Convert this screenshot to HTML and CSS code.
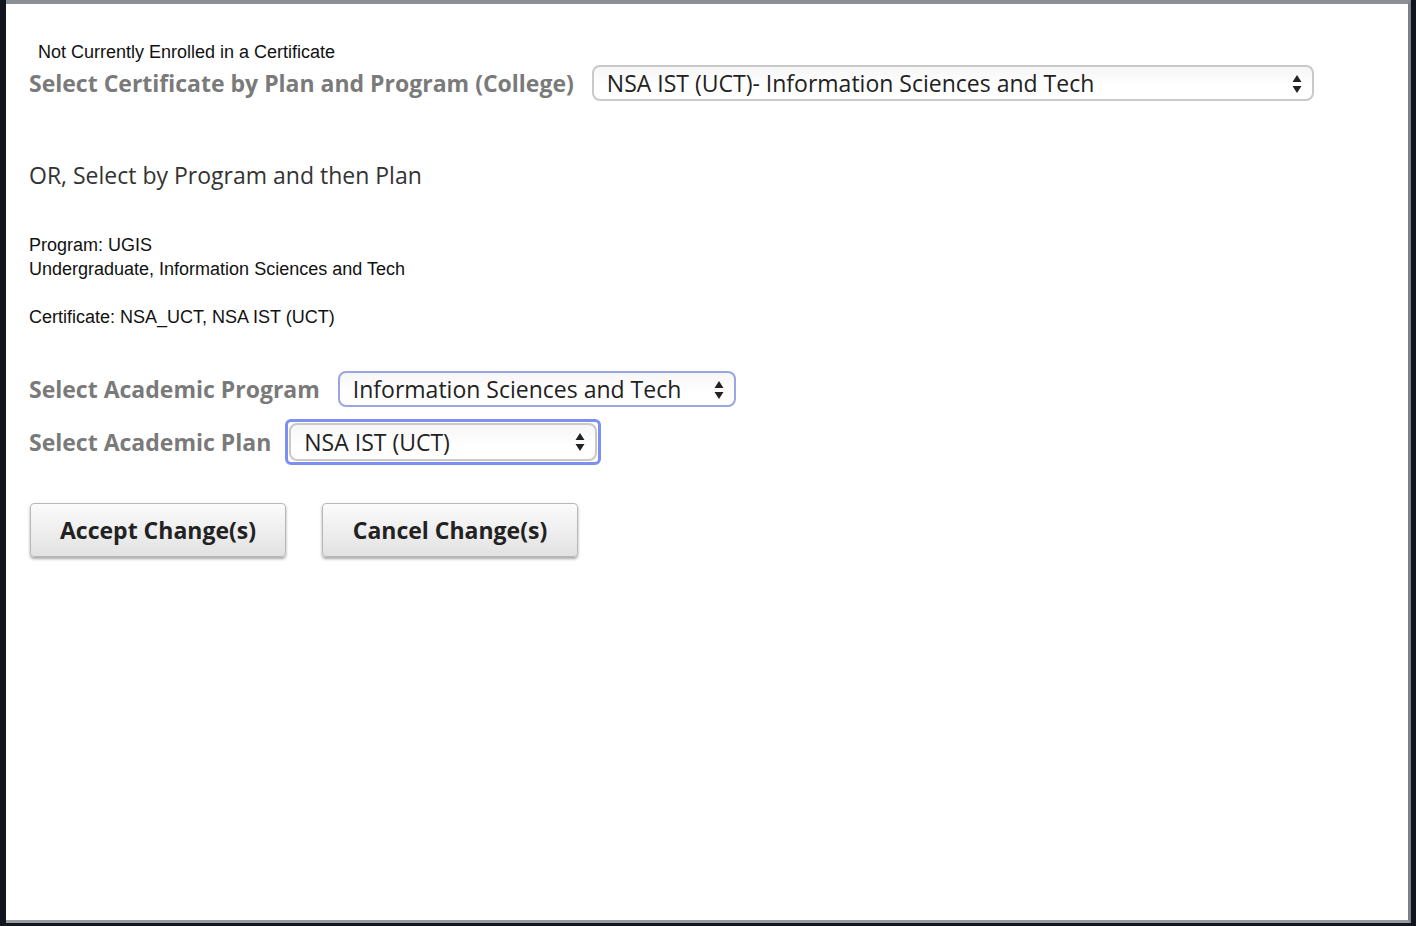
FILE: index.html
```html
<!DOCTYPE html>
<html>
<head>
<meta charset="utf-8">
<link rel="stylesheet" href="styles.css">
</head>
<body>
<div class="panel">
  <div class="status">Not Currently Enrolled in a Certificate</div>
  <div class="row row-cert">
    <label class="lbl">Select Certificate by Plan and Program (College)</label>
    <div class="sel sel-cert">
      <span class="sel-text">NSA IST (UCT)- Information Sciences and Tech</span>
      <svg class="arrows" width="10" height="22" viewBox="0 0 10 22"><path d="M5 2 L9.5 9 L0.5 9 Z M0.5 13 L9.5 13 L5 20 Z" fill="#222"/></svg>
    </div>
  </div>
  <div class="or">OR, Select by Program and then Plan</div>
  <div class="info">
    <div>Program: UGIS</div>
    <div>Undergraduate, Information Sciences and Tech</div>
  </div>
  <div class="info cert">Certificate: NSA_UCT, NSA IST (UCT)</div>
  <div class="row row-prog">
    <label class="lbl">Select Academic Program</label>
    <div class="sel sel-prog">
      <span class="sel-text">Information Sciences and Tech</span>
      <svg class="arrows" width="10" height="22" viewBox="0 0 10 22"><path d="M5 2 L9.5 9 L0.5 9 Z M0.5 13 L9.5 13 L5 20 Z" fill="#222"/></svg>
    </div>
  </div>
  <div class="row row-plan">
    <label class="lbl">Select Academic Plan</label>
    <div class="focus">
      <div class="sel sel-plan">
        <span class="sel-text">NSA IST (UCT)</span>
        <svg class="arrows" width="10" height="22" viewBox="0 0 10 22"><path d="M5 2 L9.5 9 L0.5 9 Z M0.5 13 L9.5 13 L5 20 Z" fill="#222"/></svg>
      </div>
    </div>
  </div>
  <div class="buttons">
    <button class="btn">Accept Change(s)</button>
    <button class="btn">Cancel Change(s)</button>
  </div>
</div>
</body>
</html>
```

FILE: styles.css
```css
html, body {
  margin: 0;
  padding: 0;
  background: #11161e;
  height: 926px;
  overflow: hidden;
}
.panel {
  box-sizing: border-box;
  margin-left: 6px;
  width: 1405px;
  height: 923px;
  background: #ffffff;
  border-top: 4px solid #8c9094;
  border-right: 3px solid #7d8186;
  border-bottom: 3px solid #9a9da0;
  padding: 38px 0 0 23px;
  font-family: "Open Sans", sans-serif;
}
.status {
  font-family: "Liberation Sans", Arial, sans-serif;
  font-size: 18px;
  color: #111;
  margin-left: 9px;
  line-height: 20px;
}
.row {
  display: flex;
  align-items: center;
}
.lbl {
  font-weight: 700;
  font-size: 23px;
  line-height: 30px;
  color: #7a7a7a;
}
.row-cert { margin-top: 3px; }
.row-cert .lbl { margin-right: 18px; }
.sel {
  position: relative;
  box-sizing: border-box;
  display: flex;
  align-items: center;
  border: 2px solid #c9c9c9;
  border-radius: 8px;
  background: linear-gradient(#f6f6f6, #ffffff 60%);
  height: 36px;
  padding-left: 13px;
  font-size: 23px;
  color: #222;
}
.sel-cert { width: 722px; }
.arrows {
  position: absolute;
  right: 10px;
  top: 6px;
}
.or {
  margin-top: 59px;
  font-size: 23px;
  line-height: 30px;
  color: #333;
}
.info {
  font-family: "Liberation Sans", Arial, sans-serif;
  font-size: 18px;
  color: #111;
  line-height: 24px;
}
.or + .info { margin-top: 43px; }
.cert { margin-top: 24px; }
.row-prog { margin-top: 42px; }
.row-prog .lbl { margin-right: 18px; }
.sel-prog { width: 398px; border-color: #9aa6e0; }
.row-plan { margin-top: 12px; }
.row-plan .lbl { margin-right: 14px; }
.focus {
  border: 3px solid #7d8ff0;
  border-radius: 6px;
  padding: 1px;
}
.sel-plan { width: 308px; height: 38px; border-color: #c9c9c9; }
.buttons {
  display: flex;
  gap: 35px;
  margin-top: 38px;
}
.btn {
  box-sizing: border-box;
  width: 256px;
  height: 54px;
  font-family: "Open Sans", sans-serif;
  font-weight: 700;
  font-size: 23px;
  color: #222;
  background: linear-gradient(#fbfbfb, #e2e2e2);
  border: 1px solid #b8b8b8;
  border-radius: 4px;
  box-shadow: 0 2px 3px rgba(0,0,0,0.35);
  margin-left: 1px;
}
```
